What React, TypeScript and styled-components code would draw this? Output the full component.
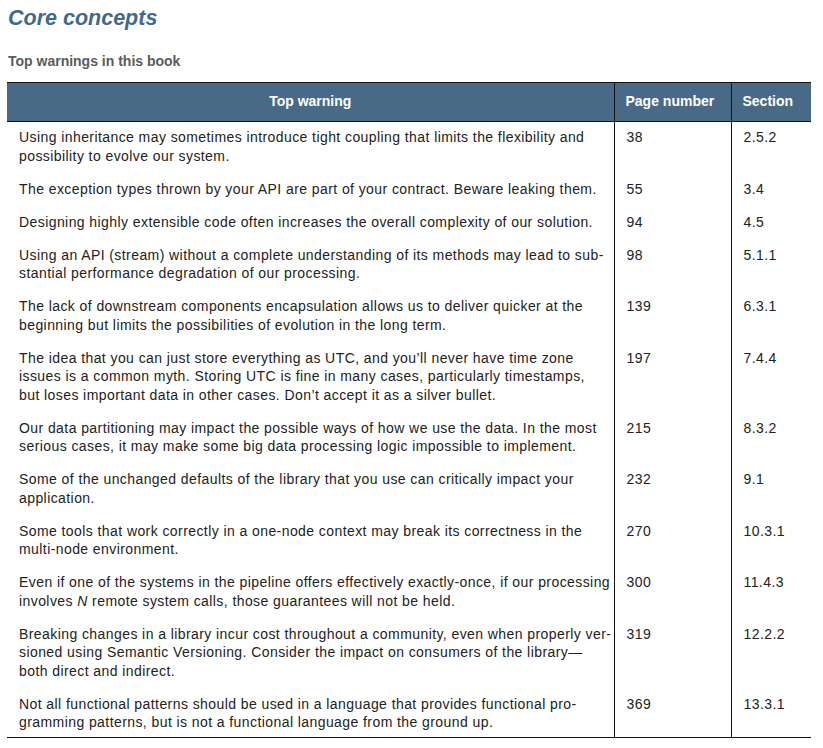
import React from "react";
import styled, { createGlobalStyle } from "styled-components";

const GlobalStyle = createGlobalStyle`
  body {
    margin: 0;
    background: #ffffff;
    font-family: "Liberation Sans", Arial, sans-serif;
    color: #231f20;
  }
`;

const Page = styled.div`
  padding: 3px 12px 0 7px;
  width: 823px;
  box-sizing: border-box;
`;

const Title = styled.h1`
  margin: 0 0 0 1px;
  font-size: 21.5px;
  line-height: 30px;
  font-style: italic;
  font-weight: bold;
  color: #3f6a8c;
`;

const Subtitle = styled.h2`
  margin: 19px 0 12px 1px;
  font-size: 14px;
  line-height: 18px;
  font-weight: bold;
  color: #5b5b5b;
`;

const Table = styled.table`
  width: 804px;
  border-collapse: collapse;
  table-layout: fixed;
  border-top: 1.5px solid #111;
  border-bottom: 1.5px solid #111;
`;

const HeadCell = styled.th<{ $center?: boolean; $width: number; $last?: boolean }>`
  width: ${({ $width }) => $width}px;
  height: 39px;
  padding: 0 11px 3px;
  background: #486a86;
  color: #ffffff;
  font-size: 14px;
  font-weight: bold;
  text-align: ${({ $center }) => ($center ? "center" : "left")};
  border-bottom: 1.5px solid #111;
  border-right: ${({ $last }) => ($last ? "none" : "1px solid #111")};
  box-sizing: border-box;
`;

const Row = styled.tr`
  &:last-child td {
    padding-bottom: 5px;
  }
`;

const Cell = styled.td<{ $last?: boolean }>`
  vertical-align: top;
  padding: 6px 8px 8.5px 12px;
  font-size: 14px;
  line-height: 18.5px;
  letter-spacing: 0.42px;
  color: #222;
  border-right: ${({ $last }) => ($last ? "none" : "1px solid #111")};
`;

const Line = styled.span`
  display: block;
  white-space: nowrap;
`;

type Warning = { lines: React.ReactNode[]; page: string; section: string };

const warnings: Warning[] = [
  {
    lines: [
      "Using inheritance may sometimes introduce tight coupling that limits the flexibility and",
      "possibility to evolve our system.",
    ],
    page: "38",
    section: "2.5.2",
  },
  {
    lines: ["The exception types thrown by your API are part of your contract. Beware leaking them."],
    page: "55",
    section: "3.4",
  },
  {
    lines: ["Designing highly extensible code often increases the overall complexity of our solution."],
    page: "94",
    section: "4.5",
  },
  {
    lines: [
      "Using an API (stream) without a complete understanding of its methods may lead to sub-",
      "stantial performance degradation of our processing.",
    ],
    page: "98",
    section: "5.1.1",
  },
  {
    lines: [
      "The lack of downstream components encapsulation allows us to deliver quicker at the",
      "beginning but limits the possibilities of evolution in the long term.",
    ],
    page: "139",
    section: "6.3.1",
  },
  {
    lines: [
      "The idea that you can just store everything as UTC, and you\u2019ll never have time zone",
      "issues is a common myth. Storing UTC is fine in many cases, particularly timestamps,",
      "but loses important data in other cases. Don\u2019t accept it as a silver bullet.",
    ],
    page: "197",
    section: "7.4.4",
  },
  {
    lines: [
      "Our data partitioning may impact the possible ways of how we use the data. In the most",
      "serious cases, it may make some big data processing logic impossible to implement.",
    ],
    page: "215",
    section: "8.3.2",
  },
  {
    lines: [
      "Some of the unchanged defaults of the library that you use can critically impact your",
      "application.",
    ],
    page: "232",
    section: "9.1",
  },
  {
    lines: [
      "Some tools that work correctly in a one-node context may break its correctness in the",
      "multi-node environment.",
    ],
    page: "270",
    section: "10.3.1",
  },
  {
    lines: [
      "Even if one of the systems in the pipeline offers effectively exactly-once, if our processing",
      <>
        involves <i>N</i> remote system calls, those guarantees will not be held.
      </>,
    ],
    page: "300",
    section: "11.4.3",
  },
  {
    lines: [
      "Breaking changes in a library incur cost throughout a community, even when properly ver-",
      "sioned using Semantic Versioning. Consider the impact on consumers of the library\u2014",
      "both direct and indirect.",
    ],
    page: "319",
    section: "12.2.2",
  },
  {
    lines: [
      "Not all functional patterns should be used in a language that provides functional pro-",
      "gramming patterns, but is not a functional language from the ground up.",
    ],
    page: "369",
    section: "13.3.1",
  },
];

const App = () => {
  return (
    <Page>
      <GlobalStyle />
      <Title>Core concepts</Title>
      <Subtitle>Top warnings in this book</Subtitle>
      <Table>
        <thead>
          <tr>
            <HeadCell $center $width={607}>
              Top warning
            </HeadCell>
            <HeadCell $width={117}>Page number</HeadCell>
            <HeadCell $width={80} $last>
              Section
            </HeadCell>
          </tr>
        </thead>
        <tbody>
          {warnings.map((w) => (
            <Row key={w.section}>
              <Cell>
                {w.lines.map((line, i) => (
                  <Line key={i}>{line}</Line>
                ))}
              </Cell>
              <Cell>{w.page}</Cell>
              <Cell $last>{w.section}</Cell>
            </Row>
          ))}
        </tbody>
      </Table>
    </Page>
  );
};

export default App;
